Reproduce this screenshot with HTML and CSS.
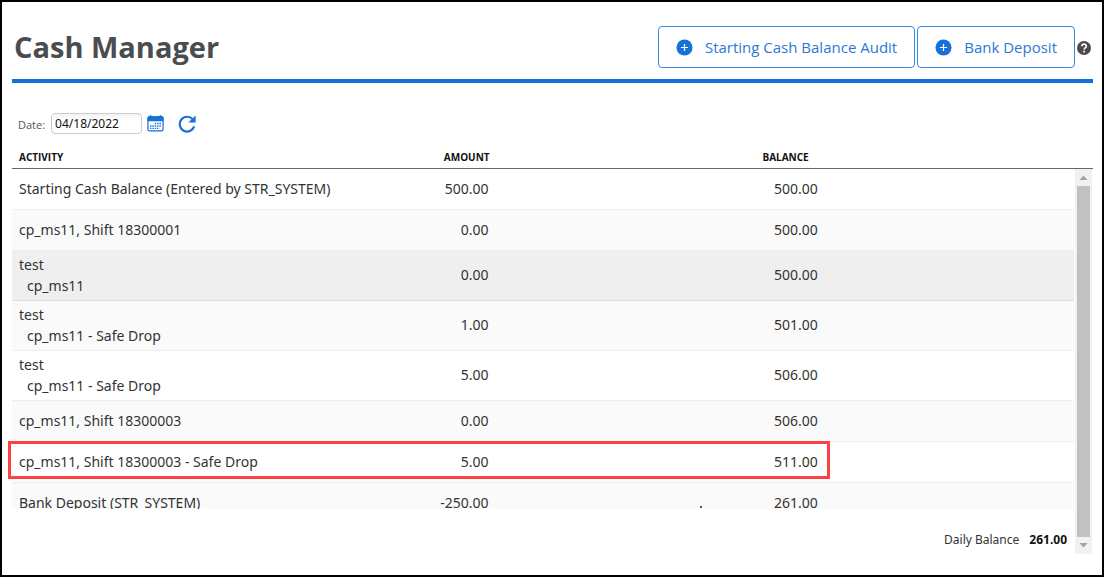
FILE: index.html
```html
<!DOCTYPE html>
<html lang="en">
<head>
<meta charset="utf-8">
<title>Cash Manager</title>
<link rel="stylesheet" href="styles.css">
</head>
<body>
<div class="page">
  <header class="page-header">
    <h1 class="title">Cash Manager</h1>
    <div class="actions">
      <button class="action" type="button">
        <svg class="plus" viewBox="0 0 18 18" aria-hidden="true"><circle cx="9" cy="9" r="8.5" fill="#1672d8"/><path d="M9 5.2v7.6M5.2 9h7.6" stroke="#fff" stroke-width="1.3"/></svg>
        Starting Cash Balance Audit
      </button>
      <button class="action" type="button">
        <svg class="plus" viewBox="0 0 18 18" aria-hidden="true"><circle cx="9" cy="9" r="8.5" fill="#1672d8"/><path d="M9 5.2v7.6M5.2 9h7.6" stroke="#fff" stroke-width="1.3"/></svg>
        Bank Deposit
      </button>
      <button class="icon-button help" type="button" aria-label="Help">
        <svg width="14" height="14" viewBox="0 0 14 14" aria-hidden="true"><circle cx="7" cy="7" r="7" fill="#4a4a4a"/><path d="M4.8 5.3C4.9 2.5 9.3 2.5 9.3 5.2C9.3 6.9 7.1 6.8 7.1 8.6" fill="none" stroke="#fff" stroke-width="1.7"/><path d="M6.2 9.8h1.8v1.8H6.2z" fill="#fff"/></svg>
      </button>
    </div>
  </header>

  <form class="filter">
    <label class="date-label" for="date">Date:</label>
    <input class="date" id="date" type="text" value="04/18/2022">
    <button class="icon-button calendar" type="button" aria-label="Choose date">
      <svg width="17" height="17" viewBox="0 0 18 18" aria-hidden="true"><rect x="1" y="2" width="16" height="14.8" rx="1.8" fill="#fff" stroke="#1672d8" stroke-width="1.3"/><path d="M.5 6.6V3Q.5 1.4 2 1.4H2.8V.3H4.6V1.4H13.4V.3H15.2V1.4H16Q17.5 1.4 17.5 3V6.6z" fill="#1672d8"/><path d="M8.2 9h7M3.2 11.6h12M3.2 14.2h9.4" stroke="#1672d8" stroke-width="1.5" stroke-dasharray="1.5 1"/></svg>
    </button>
    <button class="icon-button" type="button" aria-label="Refresh">
      <svg width="18" height="18" viewBox="0 0 18 18" aria-hidden="true"><path d="M14.8 4.4A7.4 7.4 0 1 0 16.2 11.4" fill="none" stroke="#1672d8" stroke-width="2.2"/><path d="M17.6 .6V7.4H10.4z" fill="#1672d8"/></svg>
    </button>
  </form>

  <main class="ledger">
    <div class="ledger-body">
      <div class="list">
        <table class="table">
          <colgroup><col class="col-activity"><col class="col-amount"><col class="col-balance"><col></colgroup>
          <thead>
            <tr><th scope="col">Activity</th><th class="head-amount" scope="col">Amount</th><th class="head-balance" scope="col">Balance</th><td></td></tr>
          </thead>
          <tbody>
            <tr><td>Starting Cash Balance (Entered by STR_SYSTEM)</td><td class="num">500.00</td><td class="num">500.00</td><td></td></tr>
            <tr><td>cp_ms11, Shift 18300001</td><td class="num">0.00</td><td class="num">500.00</td><td></td></tr>
            <tr class="selected"><td>test<div class="sub">cp_ms11</div></td><td class="num">0.00</td><td class="num">500.00</td><td></td></tr>
            <tr><td>test<div class="sub">cp_ms11 - Safe Drop</div></td><td class="num">1.00</td><td class="num">501.00</td><td></td></tr>
            <tr><td>test<div class="sub">cp_ms11 - Safe Drop</div></td><td class="num">5.00</td><td class="num">506.00</td><td></td></tr>
            <tr><td>cp_ms11, Shift 18300003</td><td class="num">0.00</td><td class="num">506.00</td><td></td></tr>
            <tr class="marked"><td>cp_ms11, Shift 18300003 - Safe Drop</td><td class="num">5.00</td><td class="num">511.00</td><td></td></tr>
            <tr><td>Bank Deposit (STR_SYSTEM)</td><td class="num">-250.00</td><td class="num"><span class="dot"></span>261.00</td><td></td></tr>
          </tbody>
        </table>
      </div>
      <div class="total"><span>Daily Balance</span><strong>261.00</strong></div>
    </div>
    <div class="rail">
      <div class="rail-head"></div>
      <div class="scrollbar" aria-hidden="true">
        <svg class="arrow" viewBox="0 0 17 17"><path d="M4.5 11L8.5 6.5L12.5 11z" fill="#a3a3a3"/></svg>
        <div class="thumb"></div>
        <svg class="arrow" viewBox="0 0 17 17"><path d="M4.5 6L8.5 10.5L12.5 6z" fill="#a3a3a3"/></svg>
      </div>
    </div>
  </main>
</div>
</body>
</html>
```

FILE: styles.css
```css
* { box-sizing: border-box; }

body {
  margin: 0;
  background: #fff;
  color: #333;
  font: 14px/21px "Noto Sans", "Open Sans", sans-serif;
}

.page {
  display: flex;
  flex-direction: column;
  height: 100vh;
  padding: 22px 9px 21px 10px;
  border: 2px solid #000;
}

.page-header {
  display: flex;
  flex: none;
  align-items: flex-start;
  justify-content: space-between;
  height: 59px;
  border-bottom: 4px solid #1672d8;
}

.title {
  margin: 4px 0 0 2px;
  color: #4a4d50;
  font: bold 29px/38px "Open Sans", sans-serif;
}

.actions {
  display: flex;
  align-items: center;
  gap: 2px;
  margin: 2px 2px 0 0;
}

.action {
  display: flex;
  align-items: center;
  gap: 12px;
  height: 42px;
  padding: 0 17px;
  border: 1px solid #3a89df;
  border-radius: 4px;
  background: #fff;
  color: #2d78d6;
  font: 500 15px/20px "Open Sans", sans-serif;
}

.plus { width: 17px; height: 17px; }

.icon-button {
  display: flex;
  padding: 0;
  border: 0;
  background: none;
}

.help { padding-top: 2px; }

.filter {
  display: flex;
  flex: none;
  align-items: center;
  height: 21px;
  margin: 30px 0 0 6px;
}

.date-label {
  margin-right: 6px;
  padding-top: 3px;
  color: #555;
  font: 11px/18px "Open Sans", sans-serif;
}

.date {
  width: 91px;
  height: 21px;
  padding: 0 3px;
  border: 1px solid #ccc;
  border-radius: 4px;
  background: linear-gradient(#f3f3f3, #fff 6px);
  color: #111;
  font: 12px/18px "Noto Sans", sans-serif;
}

.calendar { margin: 0 14px 0 5px; }

.ledger {
  display: flex;
  flex: 1;
  min-height: 0;
  margin-top: 12px;
}

.ledger-body {
  display: flex;
  flex: 1;
  flex-direction: column;
  min-width: 0;
}

/* The gutter leaves room for the outline of a marked row. */
.list {
  flex: 1;
  min-height: 0;
  margin-left: -4px;
  padding-left: 4px;
  overflow: hidden;
}

.table {
  width: 100%;
  border-collapse: separate;
  border-spacing: 0;
  table-layout: fixed;
}

.col-activity { width: 40%; }
.col-amount { width: 6%; }
.col-balance { width: 31%; }

.table th,
.table thead td,
.rail-head {
  height: 23px;
  padding: 0 7px;
  border-bottom: 1px solid #666;
}

.table th {
  color: #111;
  font: bold 10px/16px "Open Sans", sans-serif;
  text-align: left;
  text-transform: uppercase;
}

.table .head-amount { padding-right: 0; }
.table .head-balance { padding-right: 21px; text-align: right; }

.table tbody td {
  height: 41px;
  padding: 3px 7px 4px;
  border-bottom: 1px solid #eee;
}

.table tbody tr:nth-child(even) { background: #fafafa; }
.table tbody .num { padding: 0 12px 2px 0; text-align: right; }
.table tbody .selected { background: #efefef; }
.table tbody .selected td { border-color: #ddd; }
.sub { padding-left: 8px; }

.marked { position: relative; }

.marked td:first-child::after {
  position: absolute;
  inset: -1px 23% 4px -4px;
  border: 3px solid #fb4141;
  content: "";
}

.dot {
  display: inline-block;
  width: 2px;
  height: 2px;
  margin-right: 72px;
  background: #555;
}

.total {
  display: flex;
  flex: none;
  align-items: center;
  justify-content: flex-end;
  gap: 10px;
  height: 45px;
  padding: 16px 7px 0 0;
  font-size: 12px;
}

.total strong { color: #111; }

.rail {
  display: flex;
  flex: none;
  flex-direction: column;
  width: 19px;
}

.rail-head { flex: none; }

.scrollbar {
  display: flex;
  flex: 1;
  flex-direction: column;
  width: 17px;
  margin-left: 1px;
  background: #f1f1f1;
}

.arrow { flex: none; width: 17px; height: 17px; }

.thumb {
  flex: 1;
  margin: 0 2px;
  background: #c1c1c1;
}
```
